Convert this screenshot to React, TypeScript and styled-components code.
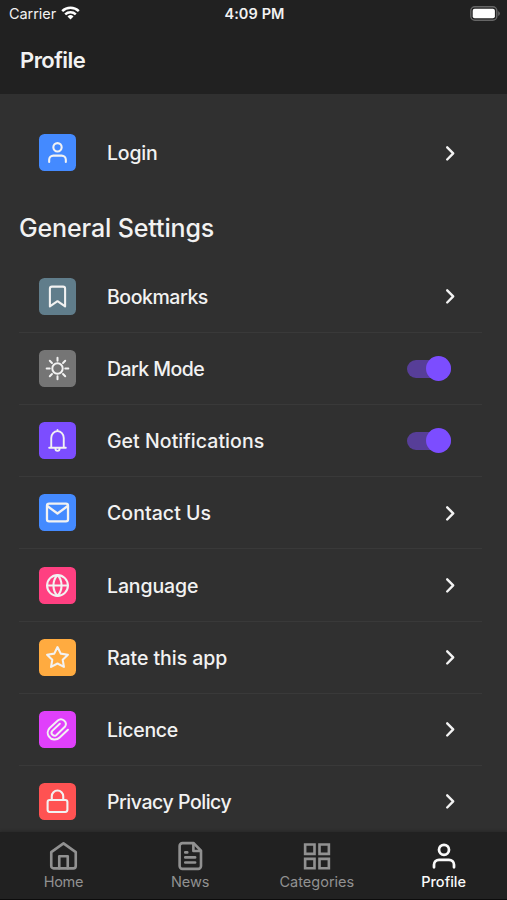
import React from "react";
import styled, { createGlobalStyle } from "styled-components";

const Global = createGlobalStyle`
  * { box-sizing: border-box; }
  body { margin: 0; background: #303030; font-family: Inter, "Liberation Sans", sans-serif; color: #f2f2f2; }
`;

const Screen = styled.div`
  width: 507px;
  height: 900px;
  display: flex;
  flex-direction: column;
  overflow: hidden;
  background: #303030;
`;
const Header = styled.header`
  flex: none;
  height: 94px;
  background: #212121;
`;
const StatusBar = styled.div`
  height: 27px;
  padding: 0 7px 0 9px;
  display: grid;
  grid-template-columns: 1fr auto 1fr;
  align-items: center;
`;
const Carrier = styled.div`
  display: flex;
  align-items: center;
  gap: 5px;
`;
const Battery = styled.div`
  display: flex;
  justify-content: flex-end;
`;
const Text = styled.span<{ $size: number; $weight?: number; $track?: number }>`
  font-size: ${(p) => p.$size}px;
  font-weight: ${(p) => p.$weight ?? 400};
  letter-spacing: ${(p) => p.$track ?? 0}px;
  line-height: 1.2;
  white-space: nowrap;
`;
const Label = styled(Text)`
  padding-top: 2.4px;
`;
const Title = styled.h1`
  margin: 0;
  padding: 18px 0 0 20px;
  font-size: 22px;
  line-height: 30px;
  font-weight: 600;
  letter-spacing: -0.55px;
`;
const Content = styled.main`
  flex: 1;
  min-height: 0;
  overflow: hidden;
  padding: 22.5px 25px 0 19px;
`;
const SectionTitle = styled.h2`
  margin: 0;
  height: 71.5px;
  padding-top: 21.5px;
  font-size: 25px;
  line-height: 36px;
  font-weight: 500;
  letter-spacing: -0.13px;
`;
const Row = styled.div`
  height: 72.1px;
  display: flex;
  align-items: center;
  padding: 0 25px 0 19.6px;
`;
const Divided = styled.div`
  & + & { border-top: 1px solid #393939; }
  & + & > ${Row} { height: 71.1px; }
`;
const Tile = styled.div<{ $color: string }>`
  width: 37px;
  height: 37px;
  margin-right: 31.4px;
  border-radius: 5.5px;
  background: ${(p) => p.$color};
  display: grid;
  place-items: center;
`;
const Trailing = styled.div`
  margin-left: auto;
  display: flex;
  align-items: center;
`;
const Track = styled.div`
  width: 44px;
  height: 18px;
  margin-right: 6px;
  border-radius: 9px;
  background: #573e98;
  display: flex;
  align-items: center;
  justify-content: flex-end;
`;
const Thumb = styled.div`
  width: 25px;
  height: 25px;
  flex: none;
  border-radius: 50%;
  background: #7c4dff;
`;
const Nav = styled.nav`
  flex: none;
  height: 68px;
  background: #212121;
  border-bottom: 1px solid #0c0c0c;
  box-shadow: 0 -1px 3px rgba(0, 0, 0, 0.2);
  display: grid;
  grid-template-columns: repeat(4, 1fr);
`;
const Tab = styled.div<{ $active?: boolean }>`
  padding-top: 9px;
  display: flex;
  flex-direction: column;
  align-items: center;
  gap: 2px;
  color: ${(p) => (p.$active ? "#fafafa" : "#919191")};
`;
const Glyph = styled.svg`
  display: block;
  fill: none;
  stroke: currentColor;
  stroke-linecap: round;
  stroke-linejoin: round;
`;

type IconName = "user" | "bookmark" | "sun" | "bell" | "mail" | "globe" | "star" | "clip" | "lock" | "home" | "news" | "grid";

const shapes: Record<IconName, React.ReactNode> = {
  user: <><circle cx="12" cy="7" r="4" /><path d="M20 21v-2a4 4 0 0 0-4-4H8a4 4 0 0 0-4 4v2" /></>,
  bookmark: <path d="M19.3 21.5l-7.3-5-7.3 5V4.5a2 2 0 0 1 2-2h10.6a2 2 0 0 1 2 2z" />,
  sun: <><circle cx="12" cy="12" r="5" /><path d="M12 1.6v3M12 19.4v3M4.6 4.6l2.1 2.1M17.3 17.3l2.1 2.1M1.6 12h3M19.4 12h3M4.6 19.4l2.1-2.1M17.3 6.7l2.1-2.1" /></>,
  bell: <path d="M4 19h16M6 19V9.5a6 6.5 0 0 1 12 0V19M12 3V1.8M10 19.5v.5a2 2 0 0 0 4 0v-.5" />,
  mail: <><rect x="1.9" y="3.5" width="20.2" height="17" rx="2" /><path d="M2.2 5.8l9.8 7.2 9.8-7.2" /></>,
  globe: <><circle cx="12" cy="12" r="10" /><path d="M2 12h20M12 2c5.2 5.6 5.2 14.4 0 20M12 2c-5.2 5.6-5.2 14.4 0 20" /></>,
  star: <path d="M12 2l3.09 6.26L22 9.27l-5 4.87 1.18 6.88L12 17.77l-6.18 3.25L7 14.14 2 9.27l6.91-1.01z" />,
  clip: <path d="M22 12.2l-7.9 7.5a6.7 6.7 0 0 1-10.4-1.1 6.4 6.4 0 0 1 .8-8.1l7.8-7.1a4.6 4.6 0 0 1 7 5.8l-8.3 8a2.8 2.8 0 0 1-4-3.9l7.2-6.8" />,
  lock: <><rect x="2.5" y="10.5" width="19" height="11.5" rx="2" /><path d="M6.5 10.5V7a5.5 5.5 0 0 1 11 0v3.5" /></>,
  home: <><path d="M2.6 8.9L12.4 1.9l9.8 7V20a1.9 1.9 0 0 1-1.9 1.9H4.5A1.9 1.9 0 0 1 2.6 20z" /><path d="M9 21.8V12.2h6.8v9.6" /></>,
  news: <><path d="M14.9 1.7H6A2.3 2.3 0 0 0 3.7 4v16A2.3 2.3 0 0 0 6 22.3h12.5a2.3 2.3 0 0 0 2.3-2.3V7.8z" /><path d="M14.7 2v6h5.9M8.2 9.1h1.6M8.2 13.1h7.9M8.2 17.2h7.9" /></>,
  grid: <path strokeLinejoin="miter" d="M2.5 2.8h7.5v7.5H2.5zM14 2.8h7.5v7.5H14zM14 14.3h7.5v7.5H14zM2.5 14.3h7.5v7.5H2.5z" />,
};

const Icon = ({ name, size = 24, weight = 2 }: { name: IconName; size?: number; weight?: number }) => (
  <Glyph width={size} height={size} viewBox="0 0 24 24" strokeWidth={weight}>{shapes[name]}</Glyph>
);

const Chevron = () => (
  <Glyph width="12" height="18" viewBox="0 0 12 18" strokeWidth="2.4"><path d="M2.2 3.3L8.2 9.4 2.2 15.5" /></Glyph>
);

interface Item {
  label: string;
  icon: IconName;
  color: string;
  track: number;
  toggle?: boolean;
  weight?: number;
}

const login: Item = { label: "Login", icon: "user", color: "#448aff", track: -0.2 };
const items: Item[] = [
  { label: "Bookmarks", icon: "bookmark", color: "#607d8b", track: -0.44 },
  { label: "Dark Mode", icon: "sun", color: "#757575", track: -0.56, toggle: true, weight: 1.9 },
  { label: "Get Notifications", icon: "bell", color: "#7c4dff", track: 0.05, toggle: true, weight: 1.8 },
  { label: "Contact Us", icon: "mail", color: "#448aff", track: 0.05, weight: 2.2 },
  { label: "Language", icon: "globe", color: "#ff4081", track: -0.12 },
  { label: "Rate this app", icon: "star", color: "#ffab40", track: -0.04 },
  { label: "Licence", icon: "clip", color: "#e040fb", track: -0.3, weight: 1.9 },
  { label: "Privacy Policy", icon: "lock", color: "#ff5252", track: -0.46 },
];

const SettingRow = ({ item }: { item: Item }) => (
  <Row>
    <Tile $color={item.color}><Icon name={item.icon} size={25} weight={item.weight} /></Tile>
    <Label $size={19.5} $weight={450} $track={item.track}>{item.label}</Label>
    <Trailing>{item.toggle ? <Track><Thumb /></Track> : <Chevron />}</Trailing>
  </Row>
);

export default function App() {
  return (
    <Screen>
      <Global />
      <Header>
        <StatusBar>
          <Carrier>
            <Text $size={14.5} $track={-0.07}>Carrier</Text>
            <svg width="19" height="14" viewBox="0 0 19 14" fill="none" stroke="#fff" strokeWidth="2.5">
              <path d="M1.2 5.2a12 12 0 0 1 16.6 0M4.2 8.3a7.7 7.7 0 0 1 10.6 0" />
              <path d="M9.5 13.5L6.5 10.5a4.3 4.3 0 0 1 6 0z" fill="#fff" stroke="none" />
            </svg>
          </Carrier>
          <Text $size={14.5} $weight={600} $track={0.1}>4:09 PM</Text>
          <Battery>
            <svg width="30" height="15" viewBox="0 0 30 15" fill="none">
              <rect x=".8" y=".8" width="26" height="13.4" rx="4" stroke="#666" strokeWidth="1.4" />
              <rect x="2.7" y="2.7" width="22.2" height="9.6" rx="2" fill="#fff" />
              <path d="M28.2 5v5q1.7-1 1.7-2.5T28.2 5z" fill="#666" />
            </svg>
          </Battery>
        </StatusBar>
        <Title>Profile</Title>
      </Header>
      <Content>
        <SettingRow item={login} />
        <SectionTitle>General Settings</SectionTitle>
        {items.map((item) => (
          <Divided key={item.label}><SettingRow item={item} /></Divided>
        ))}
      </Content>
      <Nav>
        <Tab><Icon name="home" size={30} weight={2.1} /><Text $size={14.5} $track={-0.3}>Home</Text></Tab>
        <Tab><Icon name="news" size={30} weight={2.1} /><Text $size={14.5} $track={-0.1}>News</Text></Tab>
        <Tab><Icon name="grid" size={30} weight={2.1} /><Text $size={14.5}>Categories</Text></Tab>
        <Tab $active><Icon name="user" size={30} weight={2.2} /><Text $size={14.5} $weight={500}>Profile</Text></Tab>
      </Nav>
    </Screen>
  );
}
